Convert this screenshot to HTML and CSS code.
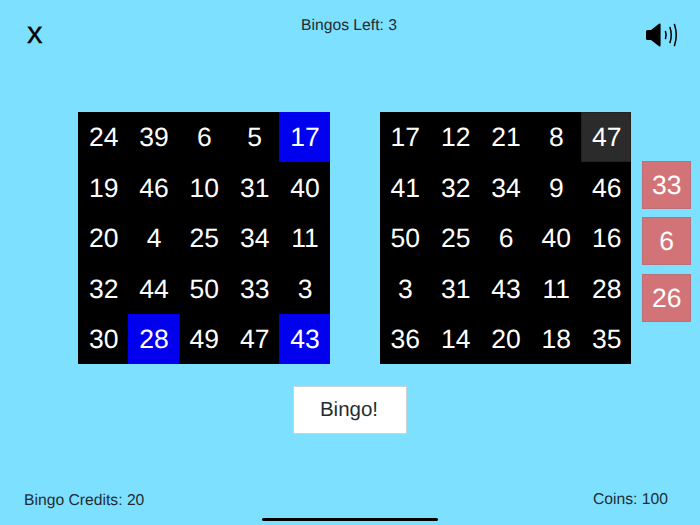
FILE: index.html
```html
<!DOCTYPE html>
<html lang="en">
<head>
<meta charset="utf-8">
<title>Bingo</title>
<link rel="stylesheet" href="styles.css">
</head>
<body>
<div class="app">
  <header class="top">
    <div class="close">x</div>
    <div class="left-count">Bingos Left: 3</div>
    <svg class="sound" viewBox="0 0 32 24" width="32" height="24" aria-hidden="true">
      <path class="cone" d="M0 8.5Q0 7 1.5 7H5L13 .8Q14.6 0 14.6 1.6V22.4Q14.6 24 13 23.2L5 17H1.5Q0 17 0 15.5Z"/>
      <path class="wave" d="M19.5 8.5Q20.7 12 19.5 15.5"/>
      <path class="wave" d="M24 4.5Q26.5 12 24 19.5"/>
      <path class="wave" d="M28.5 1.5Q32 12 28.5 22.5"/>
    </svg>
  </header>
  <main class="boards">
    <div class="board">
      <div class="cell">24</div><div class="cell">39</div><div class="cell">6</div><div class="cell">5</div><div class="cell hit">17</div>
      <div class="cell">19</div><div class="cell">46</div><div class="cell">10</div><div class="cell">31</div><div class="cell">40</div>
      <div class="cell">20</div><div class="cell">4</div><div class="cell">25</div><div class="cell">34</div><div class="cell">11</div>
      <div class="cell">32</div><div class="cell">44</div><div class="cell">50</div><div class="cell">33</div><div class="cell">3</div>
      <div class="cell">30</div><div class="cell hit">28</div><div class="cell">49</div><div class="cell">47</div><div class="cell hit">43</div>
    </div>
    <div class="board">
      <div class="cell">17</div><div class="cell">12</div><div class="cell">21</div><div class="cell">8</div><div class="cell focus">47</div>
      <div class="cell">41</div><div class="cell">32</div><div class="cell">34</div><div class="cell">9</div><div class="cell">46</div>
      <div class="cell">50</div><div class="cell">25</div><div class="cell">6</div><div class="cell">40</div><div class="cell">16</div>
      <div class="cell">3</div><div class="cell">31</div><div class="cell">43</div><div class="cell">11</div><div class="cell">28</div>
      <div class="cell">36</div><div class="cell">14</div><div class="cell">20</div><div class="cell">18</div><div class="cell">35</div>
    </div>
    <aside class="calls">
      <div class="call">33</div>
      <div class="call">6</div>
      <div class="call">26</div>
    </aside>
  </main>
  <div class="action">
    <button class="bingo" type="button">Bingo!</button>
  </div>
  <footer class="bottom">
    <span>Bingo Credits: 20</span>
    <span class="coins">Coins: 100</span>
  </footer>
  <div class="home-bar"></div>
</div>
</body>
</html>
```
FILE: styles.css
```css
* { box-sizing: border-box; }
html, body { margin: 0; height: 100%; }
body { background: #7de0ff; font-family: "Liberation Sans", Arial, sans-serif; overflow: hidden; text-rendering: geometricPrecision; }
.app { position: relative; width: 700px; height: 525px; display: flex; flex-direction: column; color: #1f2d33; }
.top { height: 112px; display: flex; justify-content: space-between; align-items: flex-start; padding: 0 22.5px 0 27px; position: relative; }
.close { margin-top: 17px; font-size: 31px; line-height: 32px; color: #000; -webkit-text-stroke: 0.3px #000; }
.left-count { position: absolute; left: 0; right: 2px; top: 17px; text-align: center; font-size: 15.7px; line-height: 18px; }
.sound { margin-top: 23px; }
.cone { fill: #000; }
.wave { fill: none; stroke: #000; stroke-width: 1.5; stroke-linecap: round; }
.boards { display: flex; align-items: flex-start; padding-left: 78px; gap: 50px; height: 252px; }
.board { width: 251.7px; height: 252.3px; background: #000; display: grid; grid-template-columns: repeat(5, 1fr); grid-template-rows: repeat(5, 1fr); }
.cell { display: flex; align-items: center; justify-content: center; color: #fff; font-size: 26.5px; padding: 1px 0 0 1px; }
.hit { background: #0000ee; }
.focus { background: #2b2b2b; box-shadow: inset 0 0 0 1px #222; }
.calls { display: flex; flex-direction: column; margin: 48.7px 0 0 -39px; gap: 8.5px; }
.call { width: 48.7px; height: 48px; background: #d27477; border: 1px solid #b9707c; color: #fff; font-size: 26.5px; padding-top: 1px; display: flex; align-items: center; justify-content: center; }
.action { display: flex; justify-content: center; padding: 22px 0 0 0; }
.bingo { width: 114px; height: 48px; background: #fff; border: 1px solid #c9d3d8; border-radius: 0; color: #1f2d33; font: 20.5px "Liberation Sans", Arial, sans-serif; text-rendering: geometricPrecision; padding: 0 2px 0 0; }
.bottom { display: flex; justify-content: space-between; align-items: flex-start; padding: 58px 32px 0 24px; font-size: 15.7px; line-height: 18px; }
.coins { margin-top: -1px; }
.home-bar { position: absolute; left: 262px; bottom: 4px; width: 176px; height: 3px; border-radius: 2px; background: #000; }
```
